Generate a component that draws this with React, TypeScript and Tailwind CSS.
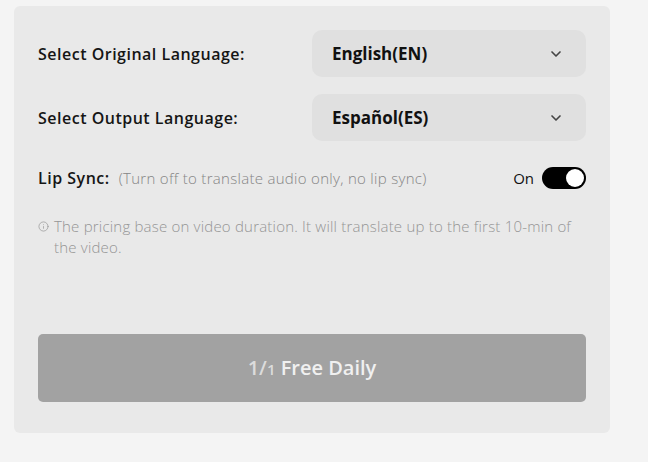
import { ChevronDown, Info } from 'lucide-react';

const font = { fontFamily: '"Open Sans", "Noto Sans", sans-serif' };

function LanguageSelect({ label, value }: { label: string; value: string }) {
    return (
        <div className="flex items-center justify-between">
            <span className="text-[16px] font-semibold tracking-[0.5px] text-[#151515]">{label}</span>
            <button className="flex h-[47px] w-[274px] items-center justify-between rounded-[10px] bg-[#e0e0e0] pl-[20px] pr-[22px]">
                <span className="text-[17px] font-bold text-[#111]">{value}</span>
                <ChevronDown className="h-[16px] w-[16px] text-[#444]" strokeWidth={2.5} />
            </button>
        </div>
    );
}

export default function App() {
    return (
        <div className="min-h-[462px] bg-[#f4f4f4] pl-[14px] pt-[6px]" style={font}>
            <div className="flex w-[596px] flex-col rounded-[6px] bg-[#e9e9e9] px-[24px] pb-[31px] pt-[24px]">
                <div className="flex flex-col gap-[17px]">
                    <LanguageSelect label="Select Original Language:" value="English(EN)" />
                    <LanguageSelect label="Select Output Language:" value="Español(ES)" />
                </div>

                <div className="mt-[26px] flex h-[22px] items-center justify-between">
                    <div className="flex items-baseline gap-[9px]">
                        <span className="text-[16px] font-semibold tracking-[0.5px] text-[#151515]">Lip Sync:</span>
                        <span className="text-[15px] font-light tracking-[0.3px] text-[#858585]">
                            (Turn off to translate audio only, no lip sync)
                        </span>
                    </div>
                    <div className="flex items-center gap-[8px]">
                        <span className="text-[15px] font-medium text-[#111]">On</span>
                        <div className="flex h-[22px] w-[44px] items-center justify-end rounded-full bg-black pr-[2px]">
                            <div className="h-[18px] w-[18px] rounded-full bg-white" />
                        </div>
                    </div>
                </div>

                <div className="mt-[27px] flex gap-[5px] text-[15px] font-light leading-[21px] tracking-[0.2px] text-[#959595]">
                    <Info className="mt-[5px] h-[11px] w-[11px] shrink-0" strokeWidth={1.5} />
                    <p>
                        The pricing base on video duration. It will translate up to the first 10-min of
                        the video.
                    </p>
                </div>

                <button className="mt-[76px] flex h-[68px] w-full items-center justify-center rounded-[5px] bg-[#a2a2a2]">
                    <span className="text-[20px] font-semibold text-[#f0f0f0]">
                        <span className="text-[#dcdcdc]">1/</span>
                        <span className="text-[15px] text-[#dcdcdc]">1</span> Free Daily
                    </span>
                </button>
            </div>
        </div>
    );
}
